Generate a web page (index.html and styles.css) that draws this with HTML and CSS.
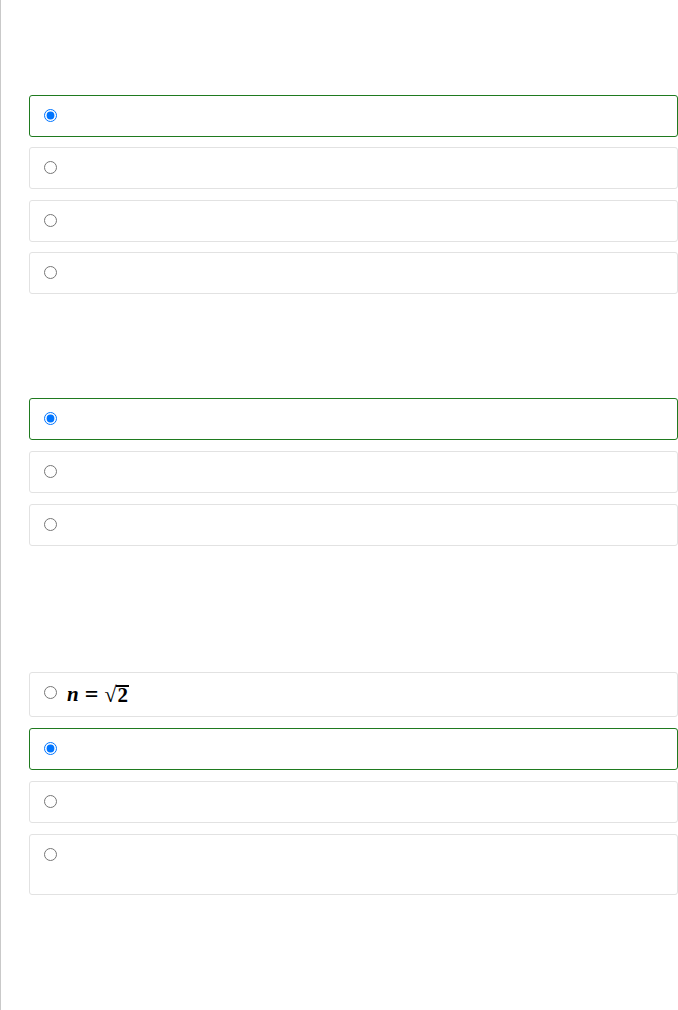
FILE: index.html
```html
<!DOCTYPE html>
<html lang="en">
<head>
<meta charset="utf-8">
<title>Quiz</title>
<link rel="stylesheet" href="styles.css">
</head>
<body>
<div class="page">
  <div class="question q-one">
    <label class="option selected"><input type="radio" name="q1" checked><span class="text"></span></label>
    <label class="option"><input type="radio" name="q1"><span class="text"></span></label>
    <label class="option"><input type="radio" name="q1"><span class="text"></span></label>
    <label class="option"><input type="radio" name="q1"><span class="text"></span></label>
  </div>
  <div class="question q-two">
    <label class="option selected"><input type="radio" name="q2" checked><span class="text"></span></label>
    <label class="option"><input type="radio" name="q2"><span class="text"></span></label>
    <label class="option"><input type="radio" name="q2"><span class="text"></span></label>
  </div>
  <div class="question q-three">
    <label class="option"><input type="radio" name="q3"><span class="text math"><span class="mi">n</span><span class="mo">=</span><span class="sqrt"><span class="surd">√</span><span class="radicand">2</span></span></span></label>
    <label class="option selected"><input type="radio" name="q3" checked><span class="text"></span></label>
    <label class="option"><input type="radio" name="q3"><span class="text"></span></label>
    <label class="option"><input type="radio" name="q3"><span class="text tall"></span></label>
  </div>
</div>
</body>
</html>
```

FILE: styles.css
```css
html, body {
  margin: 0;
  padding: 0;
  background: #ffffff;
}

body {
  font-family: "Liberation Sans", Arial, sans-serif;
  font-size: 16px;
  color: #222;
}

.page {
  min-height: 1010px;
  box-sizing: border-box;
  border-left: 1px solid #c9c9c9;
  padding-left: 28px;
}

.question {
  display: flex;
  flex-direction: column;
  gap: 11px;
}

.q-one {
  padding-top: 95px;
  gap: 10.34px;
}
.q-two { margin-top: 104px; }
.q-three { margin-top: 126px; }

.option {
  display: flex;
  align-items: flex-start;
  gap: 10px;
  border: 1px solid #e2e2e2;
  border-radius: 3px;
  padding: 13px 14px 14px 14px;
  background: #fff;
}

.option.selected {
  border-color: #1f7a1f;
}

.option input {
  margin: 0;
  width: 13px;
  height: 13px;
  flex: none;
}

.text {
  display: block;
  min-height: 13px;
}

.text.tall {
  height: 32px;
}

.math {
  height: 16px;
  line-height: 16px;
  font-family: "Liberation Serif", "Times New Roman", serif;
  font-weight: bold;
  font-size: 21px;
  color: #000;
  display: flex;
  align-items: center;
  white-space: nowrap;
}

.mi {
  font-style: italic;
}

.mo {
  margin: 0 6px;
  font-size: 24px;
}

.sqrt {
  display: inline-flex;
  align-items: flex-end;
}

.surd {
  font-size: 22px;
}

.radicand {
  border-top: 2px solid #000;
  line-height: 16px;
  padding: 0 1px 0 1px;
  margin-top: 1px;
}
```
